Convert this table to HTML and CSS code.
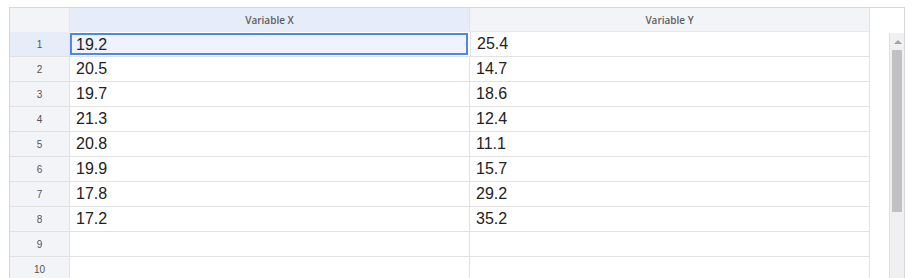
FILE: index.html
```html
<!DOCTYPE html>
<html>
<head>
<meta charset="utf-8">
<link rel="stylesheet" href="styles.css">
</head>
<body>
<div class="sheet">
  <div class="head">
    <div class="corner"></div>
    <div class="colhead active">Variable X</div>
    <div class="colhead">Variable Y</div>
    <div class="headfill"></div>
  </div>
  <div class="main">
    <div class="grid">
      <div class="row"><div class="rh active">1</div><div class="cell selected">19.2</div><div class="cell">25.4</div></div>
      <div class="row"><div class="rh">2</div><div class="cell">20.5</div><div class="cell">14.7</div></div>
      <div class="row"><div class="rh">3</div><div class="cell">19.7</div><div class="cell">18.6</div></div>
      <div class="row"><div class="rh">4</div><div class="cell">21.3</div><div class="cell">12.4</div></div>
      <div class="row"><div class="rh">5</div><div class="cell">20.8</div><div class="cell">11.1</div></div>
      <div class="row"><div class="rh">6</div><div class="cell">19.9</div><div class="cell">15.7</div></div>
      <div class="row"><div class="rh">7</div><div class="cell">17.8</div><div class="cell">29.2</div></div>
      <div class="row"><div class="rh">8</div><div class="cell">17.2</div><div class="cell">35.2</div></div>
      <div class="row"><div class="rh">9</div><div class="cell"></div><div class="cell"></div></div>
      <div class="row"><div class="rh">10</div><div class="cell"></div><div class="cell"></div></div>
    </div>
    <div class="gap"></div>
    <div class="scrollbar">
      <div class="arrow"></div>
      <div class="thumb"></div>
    </div>
  </div>
</div>
</body>
</html>
```
FILE: styles.css
```css
html, body {
  margin: 0;
  padding: 0;
  background: #fff;
}
body {
  padding: 7px 0 0 9px;
  height: 271px;
  overflow: hidden;
}
.sheet {
  width: 896px;
  border-top: 1px solid #d4d6dc;
  border-left: 1px solid #d4d6dc;
  border-right: 1px solid #d4d6dc;
  box-sizing: border-box;
  height: 271px;
  overflow: hidden;
}
.head {
  display: flex;
  height: 24px;
}
.corner {
  width: 60px;
  background: #f3f4f8;
  border-right: 1px solid #e6e7ec;
  box-sizing: border-box;
}
.colhead {
  width: 400px;
  background: #f3f4f8;
  border-right: 1px solid #e2e3e8;
  box-sizing: border-box;
  font-family: "Open Sans", Lato, sans-serif;
  font-size: 10px;
  font-weight: 600;
  color: #5f5f5f;
  text-align: center;
  line-height: 24px;
  border-bottom: 1px solid #e8e9ee;
}
.colhead.active {
  background: #e6ecf8;
  border-bottom: 1px solid #e6ecf8;
}
.headfill {
  flex: 1;
}
.main {
  display: flex;
}
.grid {
  width: 860px;
}
.row {
  display: flex;
  height: 25px;
  border-bottom: 1px solid #e2e2e2;
  box-sizing: border-box;
}
.rh {
  width: 60px;
  background: #f3f4f8;
  border-right: 1px solid #e2e3e8;
  box-sizing: border-box;
  font-family: "Liberation Sans", Arial, sans-serif;
  font-size: 10px;
  color: #555;
  text-align: center;
  line-height: 25px;
}
.rh.active {
  background: #e6ecf8;
}
.cell {
  width: 400px;
  border-right: 1px solid #e2e2e2;
  box-sizing: border-box;
  font-family: "Liberation Sans", Arial, sans-serif;
  font-size: 16px;
  color: #222;
  padding-left: 6px;
  line-height: 24px;
}
.cell.selected {
  background: #eef3fd;
  border: 2px solid #4d88e6;
  width: 398px;
  margin: 1px 2px 0 0;
  height: 22px;
  padding-left: 4px;
  line-height: 20px;
}
.row:first-child .cell.selected + .cell {
  border-left: 1px solid #e2e2e2;
}
.gap {
  width: 20px;
}
.scrollbar {
  width: 14px;
  margin-top: 1px;
  background: #f0f0f0;
  border-left: 1px solid #e0e0e0;
  height: 260px;
}
.arrow {
  height: 17px;
  display: flex;
  justify-content: center;
  align-items: center;
}
.arrow::before {
  content: "";
  width: 0;
  height: 0;
  border-left: 4px solid transparent;
  border-right: 4px solid transparent;
  border-bottom: 4px solid #a3a3a3;
  margin-left: 2px;
}
.thumb {
  margin-left: 2px;
  width: 10px;
  height: 162px;
  background: #c1c1c1;
}
```
